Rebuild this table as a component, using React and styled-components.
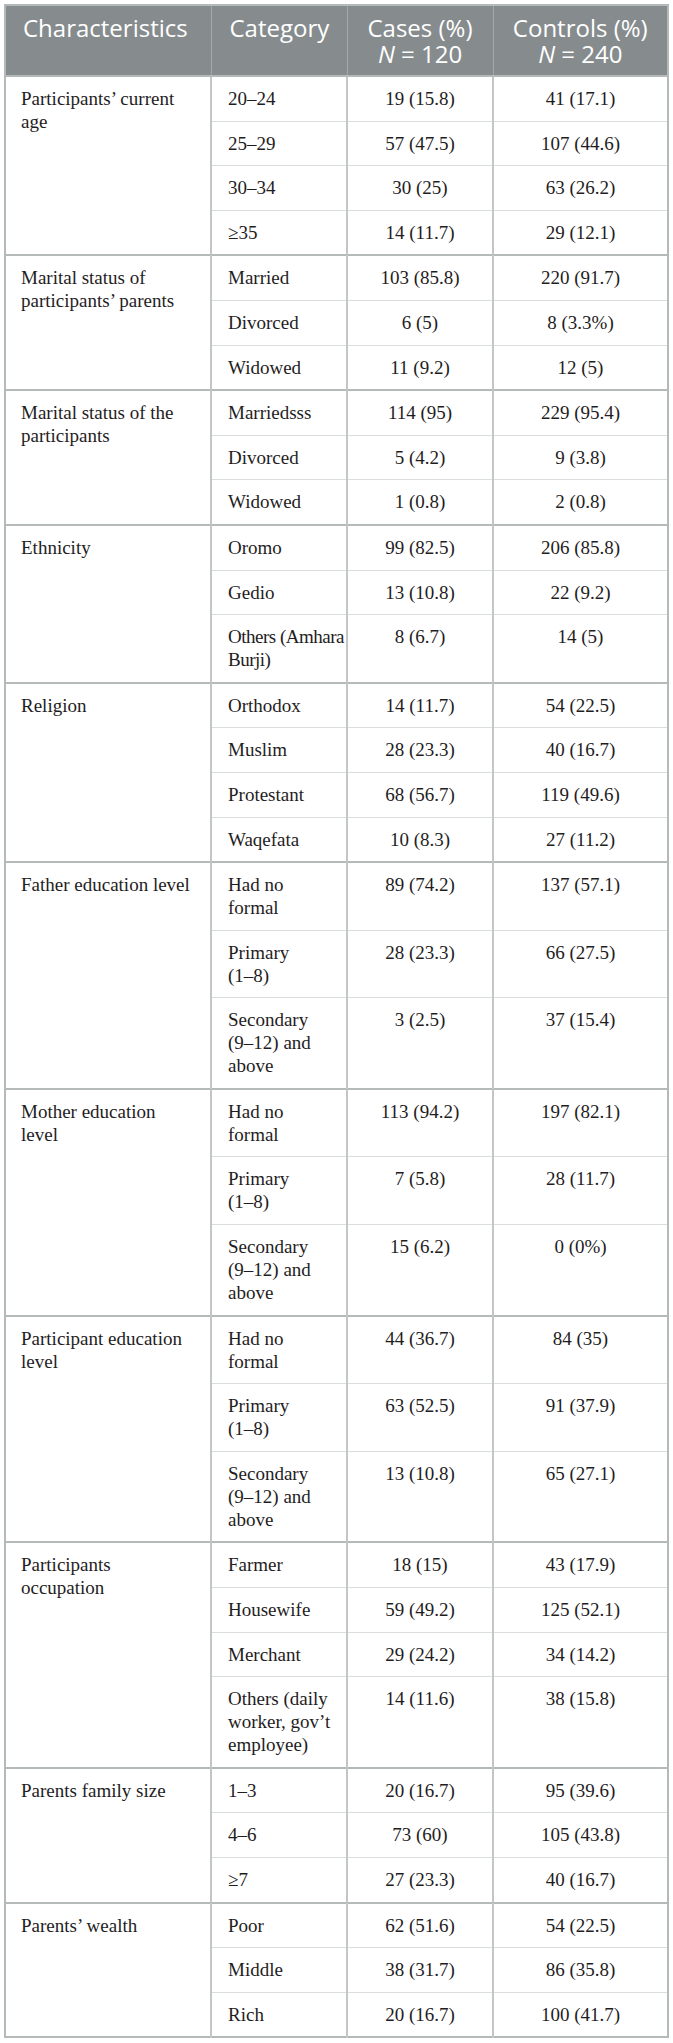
import React from 'react';
import styled, { createGlobalStyle } from 'styled-components';

const GlobalStyle = createGlobalStyle`
  html, body {
    margin: 0;
    padding: 0;
    background: #ffffff;
  }
  body {
    font-family: "Liberation Serif", "Times New Roman", serif;
  }
`;

// each cell line is given explicitly so the wrapping matches the print layout
const groups = [
  {
    label: ['Participants’ current', 'age'],
    rows: [
      [['20–24'], '19 (15.8)', '41 (17.1)'],
      [['25–29'], '57 (47.5)', '107 (44.6)'],
      [['30–34'], '30 (25)', '63 (26.2)'],
      [['≥35'], '14 (11.7)', '29 (12.1)'],
    ],
  },
  {
    label: ['Marital status of', 'participants’ parents'],
    rows: [
      [['Married'], '103 (85.8)', '220 (91.7)'],
      [['Divorced'], '6 (5)', '8 (3.3%)'],
      [['Widowed'], '11 (9.2)', '12 (5)'],
    ],
  },
  {
    label: ['Marital status of the', 'participants'],
    rows: [
      [['Marriedsss'], '114 (95)', '229 (95.4)'],
      [['Divorced'], '5 (4.2)', '9 (3.8)'],
      [['Widowed'], '1 (0.8)', '2 (0.8)'],
    ],
  },
  {
    label: ['Ethnicity'],
    rows: [
      [['Oromo'], '99 (82.5)', '206 (85.8)'],
      [['Gedio'], '13 (10.8)', '22 (9.2)'],
      [['Others (Amhara', 'Burji)'], '8 (6.7)', '14 (5)', true],
    ],
  },
  {
    label: ['Religion'],
    rows: [
      [['Orthodox'], '14 (11.7)', '54 (22.5)'],
      [['Muslim'], '28 (23.3)', '40 (16.7)'],
      [['Protestant'], '68 (56.7)', '119 (49.6)'],
      [['Waqefata'], '10 (8.3)', '27 (11.2)'],
    ],
  },
  {
    label: ['Father education level'],
    rows: [
      [['Had no', 'formal'], '89 (74.2)', '137 (57.1)'],
      [['Primary', '(1–8)'], '28 (23.3)', '66 (27.5)'],
      [['Secondary', '(9–12) and', 'above'], '3 (2.5)', '37 (15.4)'],
    ],
  },
  {
    label: ['Mother education', 'level'],
    rows: [
      [['Had no', 'formal'], '113 (94.2)', '197 (82.1)'],
      [['Primary', '(1–8)'], '7 (5.8)', '28 (11.7)'],
      [['Secondary', '(9–12) and', 'above'], '15 (6.2)', '0 (0%)'],
    ],
  },
  {
    label: ['Participant education', 'level'],
    rows: [
      [['Had no', 'formal'], '44 (36.7)', '84 (35)'],
      [['Primary', '(1–8)'], '63 (52.5)', '91 (37.9)'],
      [['Secondary', '(9–12) and', 'above'], '13 (10.8)', '65 (27.1)'],
    ],
  },
  {
    label: ['Participants', 'occupation'],
    rows: [
      [['Farmer'], '18 (15)', '43 (17.9)'],
      [['Housewife'], '59 (49.2)', '125 (52.1)'],
      [['Merchant'], '29 (24.2)', '34 (14.2)'],
      [['Others (daily', 'worker, gov’t', 'employee)'], '14 (11.6)', '38 (15.8)'],
    ],
  },
  {
    label: ['Parents family size'],
    rows: [
      [['1–3'], '20 (16.7)', '95 (39.6)'],
      [['4–6'], '73 (60)', '105 (43.8)'],
      [['≥7'], '27 (23.3)', '40 (16.7)'],
    ],
  },
  {
    label: ['Parents’ wealth'],
    rows: [
      [['Poor'], '62 (51.6)', '54 (22.5)'],
      [['Middle'], '38 (31.7)', '86 (35.8)'],
      [['Rich'], '20 (16.7)', '100 (41.7)'],
    ],
  },
];

function Lines({ items }) {
  return items.map((t, i) => (
    <React.Fragment key={i}>
      {i > 0 && <br />}
      {t}
    </React.Fragment>
  ));
}

export default function App() {
  return (
    <Page>
      <GlobalStyle />
      <Table>
        <colgroup>
          <col style={{ width: 206 }} />
          <col style={{ width: 136 }} />
          <col style={{ width: 146 }} />
          <col style={{ width: 175 }} />
        </colgroup>
        <thead>
          <tr>
            <HeadCell $first>Characteristics</HeadCell>
            <HeadCell>Category</HeadCell>
            <HeadCell $center>
              <HeadLine>Cases (%)</HeadLine>
              <HeadLine>
                <i>N</i> = 120
              </HeadLine>
            </HeadCell>
            <HeadCell $center>
              <HeadLine>Controls (%)</HeadLine>
              <HeadLine>
                <i>N</i> = 240
              </HeadLine>
            </HeadCell>
          </tr>
        </thead>
        <tbody>
          {groups.map((g, gi) =>
            g.rows.map((r, ri) => (
              <tr key={`${gi}-${ri}`}>
                {ri === 0 && (
                  <GroupCell rowSpan={g.rows.length}>
                    <Lines items={g.label} />
                  </GroupCell>
                )}
                <Cell $groupStart={ri === 0} $tight={r[3]}>
                  <Lines items={r[0]} />
                </Cell>
                <Cell $groupStart={ri === 0} $center>
                  {r[1]}
                </Cell>
                <Cell $groupStart={ri === 0} $center>
                  {r[2]}
                </Cell>
              </tr>
            ))
          )}
        </tbody>
      </Table>
    </Page>
  );
}

const Page = styled.div`
  padding: 4px 5px 6px 4px;
  background: #ffffff;
`;

const Table = styled.table`
  width: 664px;
  table-layout: fixed;
  border-collapse: collapse;
  border: 2px solid #b4b9b9;
`;

const HeadCell = styled.th`
  background: #868c8e;
  color: #ffffff;
  font-family: "Open Sans", "Liberation Sans", sans-serif;
  font-size: 24px;
  font-weight: 400;
  line-height: 26px;
  text-align: ${p => (p.$center ? 'center' : 'left')};
  vertical-align: top;
  padding: 9px 4px 8px ${p => (p.$first ? '17px' : p.$center ? '4px' : '18px')};
  border-left: 1px solid #a3a8a9;

  & i {
    font-style: italic;
  }
`;

const HeadLine = styled.div`
  white-space: nowrap;
`;

const GroupCell = styled.td`
  font-family: "Liberation Serif", "DejaVu Serif", serif;
  font-size: 19px;
  line-height: 23px;
  color: #1f1d1e;
  vertical-align: top;
  padding: 10px 6px 10.6px 15px;
  border-top: 2px solid #b4b9b9;
  white-space: nowrap;
`;

const Cell = styled.td`
  font-family: "Liberation Serif", "DejaVu Serif", serif;
  font-size: 19px;
  letter-spacing: ${p => (p.$tight ? '-0.5px' : '0')};
  line-height: 23px;
  color: #1f1d1e;
  vertical-align: top;
  text-align: ${p => (p.$center ? 'center' : 'left')};
  padding: 10px ${p => (p.$center ? '6px' : '2px')} 10.6px
    ${p => (p.$center ? '6px' : '16px')};
  border-left: 2px solid #c2c6c6;
  border-top: ${p => (p.$groupStart ? '2px solid #b4b9b9' : '1px solid #dadddd')};
  white-space: nowrap;
`;
